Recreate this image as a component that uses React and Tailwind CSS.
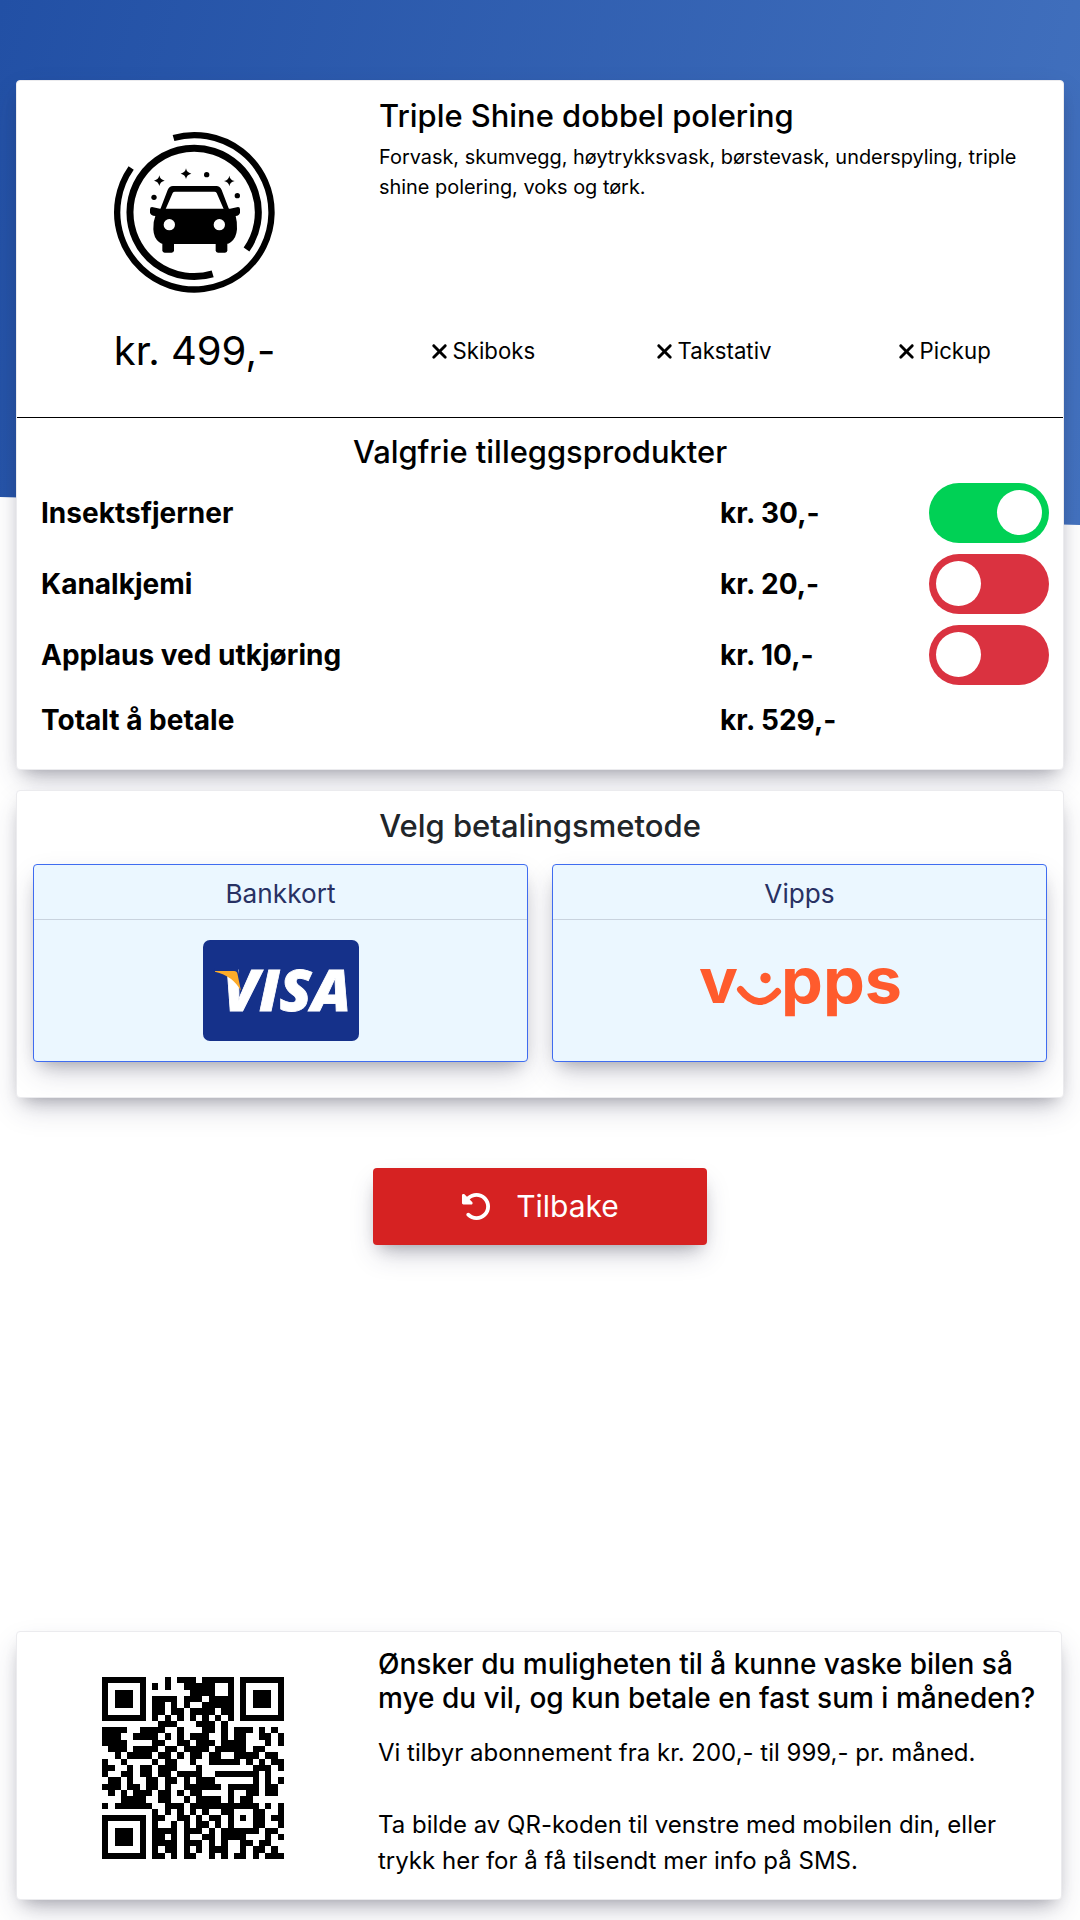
import React, { useState } from "react";
import { FaXmark, FaRotateLeft } from "react-icons/fa6";

// Optional products with price in NOK
const EXTRAS = [
    { name: "Insektsfjerner", price: 30, enabled: true },
    { name: "Kanalkjemi", price: 20, enabled: false },
    { name: "Applaus ved utkjøring", price: 10, enabled: false },
];

const BASE_PRICE = 499;

// Vehicle additions that this wash does not support
const RESTRICTIONS = ["Skiboks", "Takstativ", "Pickup"];

const QR_ROWS = [
    "#######...#.###.#####.#######",
    "#.....#.#.#..#####..#.#.....#",
    "#.###.#.......####..#.#.###.#",
    "#.###.#.####.###.####.#.###.#",
    "#.###.#.##.#.#..#####.#.###.#",
    "#.....#.##.##.####.##.#.....#",
    "#######.#.#.#.#.#.#.#.#######",
    ".........###...###.#.........",
    "####..####..#...##.#.###.#.#.",
    "###..####.#.#.###..#.##..##.#",
    "####....##..##.###.####...#.#",
    ".###.####.##.####.#####.##...",
    "..#.####.##.#.##.##..####.##.",
    "#..#....#.##..#..#####.#.#.##",
    "##..#.##.###...#........###.#",
    "#..##.##.##.####..#######.#..",
    ".##.#..##.##.#.###......#.#.#",
    "###.##.##.#..######.#####.##.",
    ".#.#.###.##.#.##....#..##.##.",
    "...####..##..#.####.#.##.....",
    "#.######..###.###########.#.#",
    "........#.#.#.#.#..##...##..#",
    "#######.##..##.#.##.#.#.##.##",
    "#.....#.#..#.#.##.#.#...##..#",
    "#.###.#.####.###.#.######.##.",
    "#.###.#.##.#.#..##.####...#.#",
    "#.###.#.####.###.#.#..##.##..",
    "#.....#.#.##.#.#.###..#.##.#.",
    "#######.##.#.##..#.#.##.#.###",
];

const SHADOW = "shadow-[0_13px_27px_-5px_rgba(50,50,93,0.25),0_8px_16px_-8px_rgba(0,0,0,0.3)]";

// White panel used for every section
function Panel({ className = "", children }) {
    return (
        <section className={`rounded border border-[#ebebee] bg-white ${SHADOW} ${className}`}>
            {children}
        </section>
    );
}

function CarWashIcon() {
    return (
        <svg viewBox="0 0 570 570" className="ml-[2px] size-[190px]">
            <g fill="none" stroke="#000">
                <path d="M220.6 54 A231.5 231.5 0 1 1 93.5 144" strokeWidth="19" />
                <path d="M439.5 388.5 A192.5 192.5 0 1 0 338 461.5" strokeWidth="21" />
            </g>
            <path fillRule="evenodd" d="M180 270 L203 210 Q208 198 219 198 L349 198 Q360 198 365 210 L388 270 Z M197 267 L371 267 L350 219 Q348 215 343 215 L225 215 Q220 215 218 219 Z" />
            <path d="M156 261 L180 266 L390 266 L414 261 Q420 261 420 268 L420 278 Q418 287 407 288 Q412 305 411 328 Q409 354 393 366 Q387 372 378 372 L192 372 Q183 372 177 366 Q161 354 160 328 Q159 305 166 288 Q152 286 150 278 L150 268 Q150 261 156 261 Z" />
            <rect x="187" y="360" width="35" height="38" rx="7" />
            <rect x="347" y="360" width="35" height="38" rx="7" />
            <g fill="#fff">
                <circle cx="208" cy="314" r="17" />
                <circle cx="358" cy="314" r="17" />
            </g>
            <circle cx="162" cy="232" r="8" />
            <circle cx="320" cy="164" r="8" />
            <circle cx="412" cy="227" r="8" />
            {[[178, 182], [258, 161], [388, 183]].map(([x, y]) => (
                <path key={x} transform={`translate(${x} ${y})`} d="M0 -16 Q2 -3 16 0 Q2 3 0 16 Q-2 3 -16 0 Q-2 -3 0 -16 Z" />
            ))}
        </svg>
    );
}

function VisaLogo() {
    return (
        <svg viewBox="0 0 156 101" className="h-[101px] w-[156px]">
            <rect width="156" height="101" rx="7" fill="#15318a" />
            <text x="20" y="70.5" textLength="128" lengthAdjust="spacingAndGlyphs" fill="#fff" stroke="#fff" strokeWidth="0.8" className="font-['Open_Sans',sans-serif] text-[56px] font-extrabold italic">VISA</text>
            <path d="M11 28 L35 28 L39 52 Q33 39 22 35 L14 34 Z" fill="#15318a" />
            <path d="M12 31 L31 31 Q34 31 34.5 34 L38 51 Q30 36 12 31.8 Z" fill="#fdab29" />
        </svg>
    );
}

function VippsLogo() {
    return (
        <svg viewBox="0 -20 204 90" className="h-[90px] w-[204px] overflow-visible" fill="#ff5b2d">
            <text x="1" y="43" textLength="39" lengthAdjust="spacingAndGlyphs" className="font-['Inter',sans-serif] text-[63px] font-bold">v</text>
            <path d="M42.5 29.5 Q60.5 52.5 79.5 31.5" fill="none" stroke="#ff5b2d" strokeWidth="7" strokeLinecap="round" />
            <circle cx="67.5" cy="18" r="5.2" />
            <text x="83" y="43" textLength="121" lengthAdjust="spacingAndGlyphs" className="font-['Inter',sans-serif] text-[63px] font-bold">pps</text>
        </svg>
    );
}

function QrCode() {
    return (
        <svg viewBox="0 0 29 29" className="size-[182px]" shapeRendering="crispEdges">
            {QR_ROWS.map((row, y) =>
                [...row].map((cell, x) => cell === "#" && <rect key={`${x}-${y}`} x={x} y={y} width="1" height="1" />)
            )}
        </svg>
    );
}

function Toggle({ on, onClick }) {
    return (
        <button
            onClick={onClick}
            className={`flex h-[60px] w-[120px] items-center rounded-full px-[7px] ${on ? "justify-end bg-[#00d155]" : "justify-start bg-[#da3240]"}`}
        >
            <span className="size-[45px] rounded-full bg-white" />
        </button>
    );
}

function PaymentMethod({ title, children }) {
    return (
        <button className={`flex h-[198px] w-[495px] flex-col rounded border border-[#3f6cf0] bg-[#ebf7ff] ${SHADOW}`}>
            <span className="h-[55px] w-full border-b border-[#c9d3de] pt-[9px] text-[26.2px] leading-10 text-[#283163]">{title}</span>
            <span className="flex w-full flex-1 justify-center">{children}</span>
        </button>
    );
}

// Main App component for the kiosk checkout page
export default function App() {
    const [extras, setExtras] = useState(EXTRAS);
    const total = BASE_PRICE + extras.reduce((sum, e) => sum + (e.enabled ? e.price : 0), 0);

    const toggle = (name) => setExtras(extras.map((e) => (e.name === name ? { ...e, enabled: !e.enabled } : e)));

    return (
        <div className="relative isolate flex h-[1920px] w-[1080px] flex-col overflow-hidden bg-white px-4 pt-20 font-['Inter',sans-serif] text-black">
            {/* Slanted blue backdrop */}
            <div className="absolute inset-x-0 top-0 -z-10 h-[526px] bg-[linear-gradient(105deg,#2250a5,#4372bf)] [clip-path:polygon(0_0,100%_0,100%_525px,0_497px)]" />

            <Panel className="h-[690px]">
                <div className="flex h-[337px] border-b border-black">
                    <div className="flex w-[353px] flex-col items-center pt-[39px]">
                        <CarWashIcon />
                        <p className="ml-[2px] mt-[17px] text-[40px] leading-[48px]">kr. {BASE_PRICE},-</p>
                    </div>
                    <div className="flex flex-1 flex-col pt-4">
                        <h2 className="pl-[9px] text-[30.9px] font-medium leading-[37px]">Triple Shine dobbel polering</h2>
                        <p className="mt-2 w-[660px] pl-[9px] text-[19.9px] leading-[30px]">
                            Forvask, skumvegg, høytrykksvask, børstevask, underspyling, triple shine polering, voks og tørk.
                        </p>
                        <div className="-ml-[3px] mt-[132px] grid w-[692px] grid-cols-3">
                            {RESTRICTIONS.map((item) => (
                                <div key={item} className="flex items-center justify-center gap-1 text-[22.2px] leading-[34px]">
                                    <FaXmark className="h-[23px] w-[19px]" />
                                    {item}
                                </div>
                            ))}
                        </div>
                    </div>
                </div>

                <h2 className="mt-[15px] text-center text-[30.9px] font-medium leading-[37px]">Valgfrie tilleggsprodukter</h2>
                <div className="mt-[7px] pl-6 pr-[14px] text-[28px] font-bold">
                    {extras.map((e) => (
                        <div key={e.name} className="flex h-[71px] items-center">
                            <span className="w-[679px]">{e.name}</span>
                            <span className="flex-1">kr. {e.price},-</span>
                            <Toggle on={e.enabled} onClick={() => toggle(e.name)} />
                        </div>
                    ))}
                    <div className="flex h-[59px] items-center">
                        <span className="w-[679px]">Totalt å betale</span>
                        <span>kr. {total},-</span>
                    </div>
                </div>
            </Panel>

            <Panel className="mt-5 h-[308px] px-4 pt-4">
                <h2 className="text-center text-[31px] font-medium leading-[37px] text-[#212529]">Velg betalingsmetode</h2>
                <div className="mt-5 flex justify-between">
                    <PaymentMethod title="Bankkort">
                        <span className="pt-5"><VisaLogo /></span>
                    </PaymentMethod>
                    <PaymentMethod title="Vipps">
                        <span className="pt-5"><VippsLogo /></span>
                    </PaymentMethod>
                </div>
            </Panel>

            <button className={`mt-[70px] flex h-[77px] w-[334px] items-center justify-center gap-6 self-center rounded bg-[#d62222] text-[30px] text-white ${SHADOW}`}>
                <FaRotateLeft className="size-[31px]" />
                Tilbake
            </button>

            <Panel className="mt-[386px] flex h-[269px] w-[1046px]">
                <div className="flex w-[361px] pl-[85px] pt-[45px]">
                    <QrCode />
                </div>
                <div className="w-[670px] pt-4">
                    <h3 className="text-[28px] font-medium leading-[33.6px]">
                        Ønsker du muligheten til å kunne vaske bilen så mye du vil, og kun betale en fast sum i måneden?
                    </h3>
                    <p className="mt-5 text-[24px] leading-9">
                        Vi tilbyr abonnement fra kr. 200,- til 999,- pr. måned.
                        <br />
                        <br />
                        Ta bilde av QR-koden til venstre med mobilen din, eller trykk her for å få tilsendt mer info på SMS.
                    </p>
                </div>
            </Panel>
        </div>
    );
}
